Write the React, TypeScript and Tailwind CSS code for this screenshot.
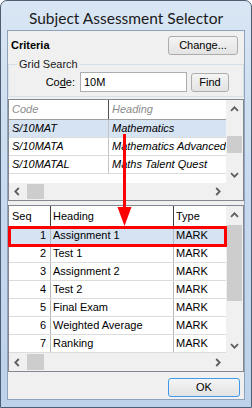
import React from "react";

type Dir = "up" | "down" | "left" | "right";

function Chevron({ dir }: { dir: Dir }) {
  const pts: Record<Dir, string> = {
    up: "1,5.8 4.5,2.3 8,5.8",
    down: "1,3.2 4.5,6.7 8,3.2",
    left: "5.8,1 2.3,4.5 5.8,8",
    right: "3.2,1 6.7,4.5 3.2,8",
  };
  return (
    <svg width="9" height="9" viewBox="0 0 9 9">
      <polyline points={pts[dir]} fill="none" stroke="#5f5f5f" strokeWidth="1.8" />
    </svg>
  );
}

function Btn({ children, className }: { children: React.ReactNode; className: string }) {
  return (
    <div
      className={
        "flex items-center justify-center rounded-[3px] border bg-gradient-to-b from-[#f4f4f4] to-[#e3e3e3] text-[11px] text-black " +
        className
      }
    >
      {children}
    </div>
  );
}

const topRows = [
  { code: "S/10MAT", heading: "Mathematics", sel: true },
  { code: "S/10MATA", heading: "Mathematics Advanced", sel: false },
  { code: "S/10MATAL", heading: "Maths Talent Quest", sel: false },
];

const bottomRows = [
  { seq: 1, heading: "Assignment 1", sel: true },
  { seq: 2, heading: "Test 1", sel: false },
  { seq: 3, heading: "Assignment 2", sel: false },
  { seq: 4, heading: "Test 2", sel: false },
  { seq: 5, heading: "Final Exam", sel: false },
  { seq: 6, heading: "Weighted Average", sel: false },
  { seq: 7, heading: "Ranking", sel: false },
];

export default function App() {
  return (
    <div className="relative h-[408px] w-[252px] overflow-hidden font-['Liberation_Sans',Arial,sans-serif] text-[11px] text-black">
      <div className="flex h-full w-full flex-col rounded-t-[7px] border border-[#4d5e73] bg-gradient-to-b from-[#d9e6f4] via-[#c6d9ee] to-[#bcd2ea] px-[6px] pb-[7px]">
        {/* title bar */}
        <div className="flex h-[29px] items-center justify-center pt-[7px] font-['Lato',sans-serif] text-[15.5px] leading-none text-[#1b1b1b]">
          Subject Assessment Selector
        </div>
        {/* client */}
        <div className="flex flex-1 flex-col border border-[#8ea3ba] bg-[#f0f0f0]">
          {/* criteria row */}
          <div className="flex h-[27px] items-start justify-between pl-[3px] pr-[6px] pt-[5px]">
            <span className="font-bold leading-[19px]">Criteria</span>
            <Btn className="h-[19px] w-[70px] border-[#adadad]">Change...</Btn>
          </div>
          {/* group box */}
          <fieldset className="m-0 border border-[#d5dfe5] px-0 pb-[4px] pt-[1px]">
            <legend className="ml-[8px] px-[2px] leading-[13px] text-[#1a1a1a]">Grid Search</legend>
            <div className="flex items-center">
              <span className="w-[66px] text-right">
                Co<span className="underline">d</span>e:
              </span>
              <div className="ml-[5px] flex h-[20px] w-[107px] items-center border border-[#abadb3] bg-white pl-[3px]">
                10M
              </div>
              <Btn className="ml-[4px] h-[19px] w-[38px] border-[#adadad]">Find</Btn>
            </div>
          </fieldset>

          {/* top grid */}
          <div className="mt-[2px] flex h-[102px] flex-col border border-[#828790] bg-white">
            <div className="flex flex-1">
              <div className="flex flex-1 flex-col overflow-hidden italic">
                <div className="flex h-[20px] shrink-0 border-b border-[#a0a0a0] text-[#8c8c8c]">
                  <div className="flex w-[100px] items-center border-r border-[#505050] pl-[3px]">Code</div>
                  <div className="flex flex-1 items-center pl-[3px]">Heading</div>
                </div>
                {topRows.map((r) => (
                  <div
                    key={r.code}
                    className={
                      "flex h-[18px] shrink-0 border-b border-[#dcdcdc] " + (r.sel ? "bg-[#d6e3f3]" : "bg-white")
                    }
                  >
                    <div className="flex w-[100px] items-center border-r border-[#c4c4c4] pl-[3px]">{r.code}</div>
                    <div className="flex flex-1 items-center overflow-hidden whitespace-nowrap pl-[3px]">
                      {r.heading}
                    </div>
                  </div>
                ))}
              </div>
              <div className="flex w-[17px] flex-col bg-[#f0f0f0]">
                <div className="flex h-[18px] items-center justify-center">
                  <Chevron dir="up" />
                </div>
                <div className="flex flex-1 flex-col">
                  <div className="mx-[1px] mt-[18px] h-[17px] bg-[#cdcdcd]" />
                </div>
                <div className="flex h-[17px] items-center justify-center">
                  <Chevron dir="down" />
                </div>
              </div>
            </div>
            <div className="flex h-[17px] bg-[#f0f0f0]">
              <div className="flex w-[17px] items-center justify-center">
                <Chevron dir="left" />
              </div>
              <div className="flex flex-1">
                <div className="my-[1px] ml-[1px] w-[17px] bg-[#cdcdcd]" />
              </div>
              <div className="flex w-[17px] items-center justify-center">
                <Chevron dir="right" />
              </div>
              <div className="w-[17px]" />
            </div>
          </div>

          {/* bottom grid */}
          <div className="mt-[4px] flex h-[167px] flex-col border border-[#828790] bg-white">
            <div className="flex flex-1">
              <div className="flex flex-1 flex-col overflow-hidden">
                <div className="flex h-[21px] shrink-0 border-b border-[#a0a0a0]">
                  <div className="flex w-[42px] items-center border-r border-[#404040] pl-[3px]">Seq</div>
                  <div className="flex w-[123px] items-center border-r border-[#404040] pl-[2px]">Heading</div>
                  <div className="flex flex-1 items-center pl-[2px]">Type</div>
                </div>
                {bottomRows.map((r) => (
                  <div
                    key={r.seq}
                    className={
                      "flex h-[18px] shrink-0 border-b border-[#dcdcdc] " + (r.sel ? "bg-[#d6e3f3]" : "bg-white")
                    }
                  >
                    <div className="flex w-[42px] items-center justify-end border-r border-[#b8b8b8] pr-[4px]">
                      {r.seq}
                    </div>
                    <div className="flex w-[123px] items-center border-r border-[#b8b8b8] pl-[2px] whitespace-nowrap">
                      {r.heading}
                    </div>
                    <div className="flex flex-1 items-center pl-[2px]">MARK</div>
                  </div>
                ))}
              </div>
              <div className="flex w-[17px] flex-col bg-[#f0f0f0]">
                <div className="flex h-[19px] items-center justify-center">
                  <Chevron dir="up" />
                </div>
                <div className="flex flex-1 flex-col">
                  <div className="mx-[1px] h-[76px] bg-[#cdcdcd]" />
                </div>
                <div className="flex h-[17px] items-center justify-center pt-[2px]">
                  <Chevron dir="down" />
                </div>
              </div>
            </div>
            <div className="flex h-[18px] bg-[#f0f0f0]">
              <div className="flex w-[17px] items-center justify-center">
                <Chevron dir="left" />
              </div>
              <div className="flex flex-1">
                <div className="my-[1px] ml-[1px] w-[17px] bg-[#cdcdcd]" />
              </div>
              <div className="flex w-[17px] items-center justify-center">
                <Chevron dir="right" />
              </div>
              <div className="w-[17px]" />
            </div>
          </div>

          {/* bottom button area */}
          <div className="flex flex-1 items-start justify-end pr-[4px] pt-[6px]">
            <Btn className="h-[19px] w-[72px] border-[#3e9bea]">OK</Btn>
          </div>
        </div>
      </div>

      {/* red annotation overlay */}
      <svg className="pointer-events-none absolute left-0 top-0" width="252" height="408" viewBox="0 0 252 408">
        <rect x="9.5" y="227.5" width="216" height="18" fill="none" stroke="#ff0000" strokeWidth="3" />
        <line x1="124.5" y1="134" x2="124.5" y2="209" stroke="#ff0000" strokeWidth="3" />
        <polygon points="117.5,207 131.5,207 124.5,226" fill="#ff0000" />
      </svg>
    </div>
  );
}
